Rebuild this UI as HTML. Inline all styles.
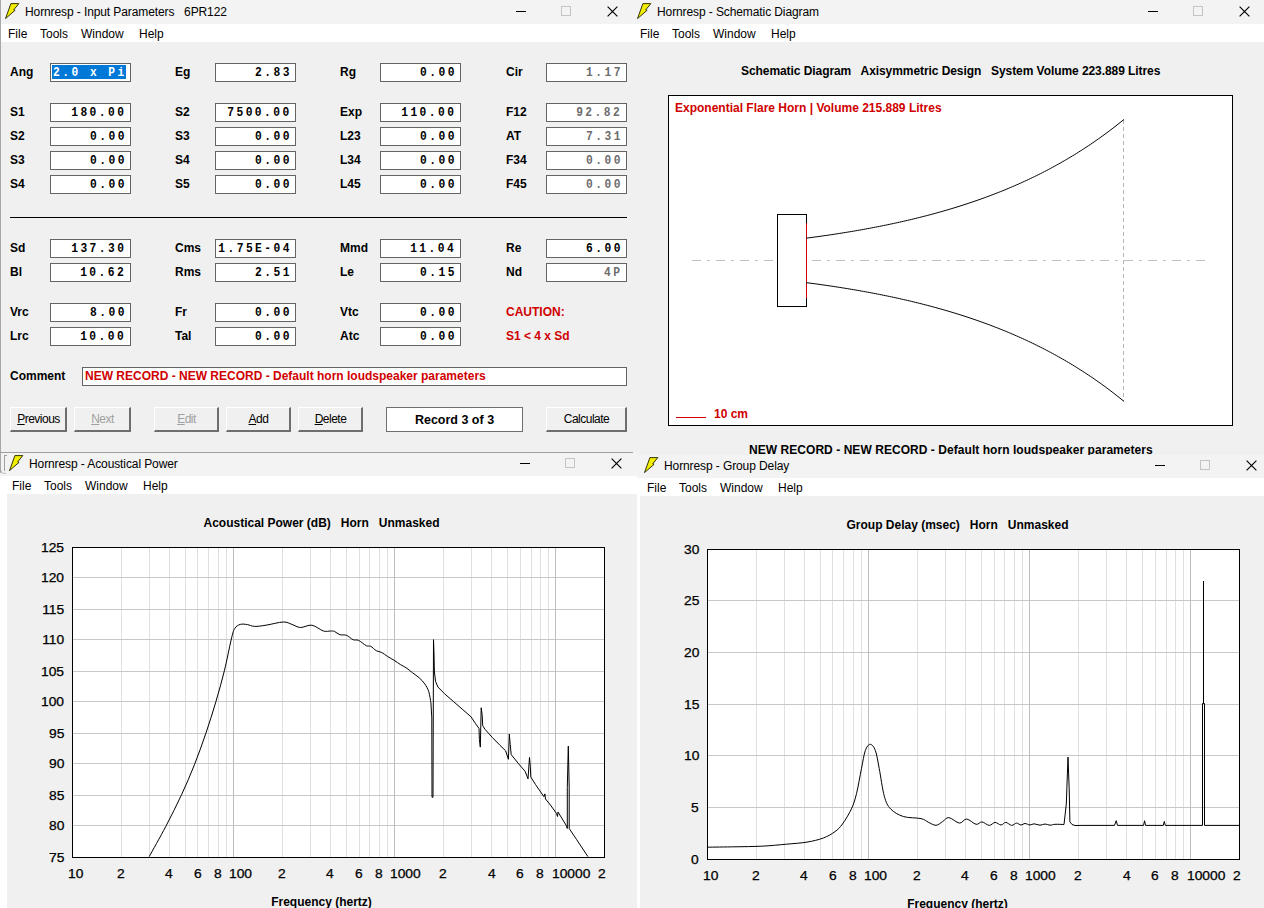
<!DOCTYPE html><html><head><meta charset="utf-8"><style>
html,body{margin:0;padding:0;width:1264px;height:908px;overflow:hidden;background:#f0f0f0;position:relative}
.t{position:absolute;white-space:pre;line-height:1}
.r{position:absolute;box-sizing:content-box}
.fld{position:absolute;background:#fff;border:1px solid #646464;box-sizing:border-box}
.btn{position:absolute;box-sizing:border-box;background:#f0f0f0;border-top:1px solid #fff;border-left:1px solid #fff;border-right:2px solid #6e6e6e;border-bottom:2px solid #6e6e6e}
</style></head><body>
<div class="r" style="left:0px;top:0px;width:633px;height:453px;background:#f0f0f0;"></div>
<div class="r" style="left:0px;top:0px;width:633px;height:24px;background:#f3f3f3;"></div>
<svg class="r" style="left:5px;top:3px" width="16" height="18" viewBox="0 0 16 18"><path d="M5.9 0.6 L13.8 0.6 L8.7 6.9 L10.1 7.3 L0.5 15.6 Z" fill="#f2ee00" stroke="#2a2a00" stroke-width="0.95" stroke-linejoin="miter"/></svg>
<div class="t" style="left:25px;top:4.84px;font:normal 12px 'Liberation Sans', sans-serif;color:#000;letter-spacing:-0.1px">Hornresp - Input Parameters   6PR122</div>
<div class="r" style="left:516px;top:11px;width:10px;height:1px;background:#000;"></div>
<div class="r" style="left:561px;top:6px;width:8px;height:8px;border:1px solid #c4c4c4"></div>
<svg class="r" style="left:607px;top:6px" width="11" height="11" viewBox="0 0 11 11"><path d="M0.6 0.6 L10.4 10.4 M10.4 0.6 L0.6 10.4" stroke="#000" stroke-width="1.15"/></svg>
<div class="r" style="left:0px;top:24px;width:633px;height:18px;background:#fff;"></div>
<div class="t" style="left:8px;top:26.84px;font:normal 12px 'Liberation Sans', sans-serif;color:#000;">File</div>
<div class="t" style="left:40px;top:26.84px;font:normal 12px 'Liberation Sans', sans-serif;color:#000;">Tools</div>
<div class="t" style="left:81px;top:26.84px;font:normal 12px 'Liberation Sans', sans-serif;color:#000;">Window</div>
<div class="t" style="left:139px;top:26.84px;font:normal 12px 'Liberation Sans', sans-serif;color:#000;">Help</div>
<div class="r" style="left:0px;top:0px;width:1px;height:453px;background:#a8a8a8;"></div>
<div class="r" style="left:0px;top:452px;width:633px;height:1px;background:#a0a0a0;"></div>
<div class="t" style="left:10px;top:65.34px;font:bold 12px 'Liberation Sans', sans-serif;color:#000;">Ang</div>
<div class="fld" style="left:50px;top:63px;width:81px;height:19px"></div>
<div class="r" style="left:52px;top:65px;width:74px;height:14px;background:#0078d7;"></div>
<div class="t" style="left:53px;top:66.42px;font:bold 12.5px 'Liberation Mono', monospace;color:#fff;letter-spacing:2.75px;transform:scaleX(0.9);transform-origin:0 0">2.0 x Pi</div>
<div class="t" style="left:175px;top:65.34px;font:bold 12px 'Liberation Sans', sans-serif;color:#000;">Eg</div>
<div class="fld" style="left:215px;top:63px;width:81px;height:19px"></div>
<div class="t" style="right:972.25px;top:66.42px;font:bold 12.5px 'Liberation Mono', monospace;color:#000;letter-spacing:2.75px;transform:scaleX(0.9);transform-origin:100% 0">2.83</div>
<div class="t" style="left:340px;top:65.34px;font:bold 12px 'Liberation Sans', sans-serif;color:#000;">Rg</div>
<div class="fld" style="left:380px;top:63px;width:81px;height:19px"></div>
<div class="t" style="right:807.25px;top:66.42px;font:bold 12.5px 'Liberation Mono', monospace;color:#000;letter-spacing:2.75px;transform:scaleX(0.9);transform-origin:100% 0">0.00</div>
<div class="t" style="left:506px;top:65.34px;font:bold 12px 'Liberation Sans', sans-serif;color:#000;">Cir</div>
<div class="fld" style="left:546px;top:63px;width:81px;height:19px"></div>
<div class="t" style="right:641.25px;top:66.42px;font:bold 12.5px 'Liberation Mono', monospace;color:#6d6d6d;letter-spacing:2.75px;transform:scaleX(0.9);transform-origin:100% 0">1.17</div>
<div class="t" style="left:10px;top:105.34px;font:bold 12px 'Liberation Sans', sans-serif;color:#000;">S1</div>
<div class="fld" style="left:50px;top:103px;width:81px;height:19px"></div>
<div class="t" style="right:1137.25px;top:106.42px;font:bold 12.5px 'Liberation Mono', monospace;color:#000;letter-spacing:2.75px;transform:scaleX(0.9);transform-origin:100% 0">180.00</div>
<div class="t" style="left:175px;top:105.34px;font:bold 12px 'Liberation Sans', sans-serif;color:#000;">S2</div>
<div class="fld" style="left:215px;top:103px;width:81px;height:19px"></div>
<div class="t" style="right:972.25px;top:106.42px;font:bold 12.5px 'Liberation Mono', monospace;color:#000;letter-spacing:2.75px;transform:scaleX(0.9);transform-origin:100% 0">7500.00</div>
<div class="t" style="left:340px;top:105.34px;font:bold 12px 'Liberation Sans', sans-serif;color:#000;">Exp</div>
<div class="fld" style="left:380px;top:103px;width:81px;height:19px"></div>
<div class="t" style="right:807.25px;top:106.42px;font:bold 12.5px 'Liberation Mono', monospace;color:#000;letter-spacing:2.75px;transform:scaleX(0.9);transform-origin:100% 0">110.00</div>
<div class="t" style="left:506px;top:105.34px;font:bold 12px 'Liberation Sans', sans-serif;color:#000;">F12</div>
<div class="fld" style="left:546px;top:103px;width:81px;height:19px"></div>
<div class="t" style="right:641.25px;top:106.42px;font:bold 12.5px 'Liberation Mono', monospace;color:#6d6d6d;letter-spacing:2.75px;transform:scaleX(0.9);transform-origin:100% 0">92.82</div>
<div class="t" style="left:10px;top:129.34px;font:bold 12px 'Liberation Sans', sans-serif;color:#000;">S2</div>
<div class="fld" style="left:50px;top:127px;width:81px;height:19px"></div>
<div class="t" style="right:1137.25px;top:130.42px;font:bold 12.5px 'Liberation Mono', monospace;color:#000;letter-spacing:2.75px;transform:scaleX(0.9);transform-origin:100% 0">0.00</div>
<div class="t" style="left:175px;top:129.34px;font:bold 12px 'Liberation Sans', sans-serif;color:#000;">S3</div>
<div class="fld" style="left:215px;top:127px;width:81px;height:19px"></div>
<div class="t" style="right:972.25px;top:130.42px;font:bold 12.5px 'Liberation Mono', monospace;color:#000;letter-spacing:2.75px;transform:scaleX(0.9);transform-origin:100% 0">0.00</div>
<div class="t" style="left:340px;top:129.34px;font:bold 12px 'Liberation Sans', sans-serif;color:#000;">L23</div>
<div class="fld" style="left:380px;top:127px;width:81px;height:19px"></div>
<div class="t" style="right:807.25px;top:130.42px;font:bold 12.5px 'Liberation Mono', monospace;color:#000;letter-spacing:2.75px;transform:scaleX(0.9);transform-origin:100% 0">0.00</div>
<div class="t" style="left:506px;top:129.34px;font:bold 12px 'Liberation Sans', sans-serif;color:#000;">AT</div>
<div class="fld" style="left:546px;top:127px;width:81px;height:19px"></div>
<div class="t" style="right:641.25px;top:130.42px;font:bold 12.5px 'Liberation Mono', monospace;color:#6d6d6d;letter-spacing:2.75px;transform:scaleX(0.9);transform-origin:100% 0">7.31</div>
<div class="t" style="left:10px;top:153.34px;font:bold 12px 'Liberation Sans', sans-serif;color:#000;">S3</div>
<div class="fld" style="left:50px;top:151px;width:81px;height:19px"></div>
<div class="t" style="right:1137.25px;top:154.42px;font:bold 12.5px 'Liberation Mono', monospace;color:#000;letter-spacing:2.75px;transform:scaleX(0.9);transform-origin:100% 0">0.00</div>
<div class="t" style="left:175px;top:153.34px;font:bold 12px 'Liberation Sans', sans-serif;color:#000;">S4</div>
<div class="fld" style="left:215px;top:151px;width:81px;height:19px"></div>
<div class="t" style="right:972.25px;top:154.42px;font:bold 12.5px 'Liberation Mono', monospace;color:#000;letter-spacing:2.75px;transform:scaleX(0.9);transform-origin:100% 0">0.00</div>
<div class="t" style="left:340px;top:153.34px;font:bold 12px 'Liberation Sans', sans-serif;color:#000;">L34</div>
<div class="fld" style="left:380px;top:151px;width:81px;height:19px"></div>
<div class="t" style="right:807.25px;top:154.42px;font:bold 12.5px 'Liberation Mono', monospace;color:#000;letter-spacing:2.75px;transform:scaleX(0.9);transform-origin:100% 0">0.00</div>
<div class="t" style="left:506px;top:153.34px;font:bold 12px 'Liberation Sans', sans-serif;color:#000;">F34</div>
<div class="fld" style="left:546px;top:151px;width:81px;height:19px"></div>
<div class="t" style="right:641.25px;top:154.42px;font:bold 12.5px 'Liberation Mono', monospace;color:#6d6d6d;letter-spacing:2.75px;transform:scaleX(0.9);transform-origin:100% 0">0.00</div>
<div class="t" style="left:10px;top:177.34px;font:bold 12px 'Liberation Sans', sans-serif;color:#000;">S4</div>
<div class="fld" style="left:50px;top:175px;width:81px;height:19px"></div>
<div class="t" style="right:1137.25px;top:178.42px;font:bold 12.5px 'Liberation Mono', monospace;color:#000;letter-spacing:2.75px;transform:scaleX(0.9);transform-origin:100% 0">0.00</div>
<div class="t" style="left:175px;top:177.34px;font:bold 12px 'Liberation Sans', sans-serif;color:#000;">S5</div>
<div class="fld" style="left:215px;top:175px;width:81px;height:19px"></div>
<div class="t" style="right:972.25px;top:178.42px;font:bold 12.5px 'Liberation Mono', monospace;color:#000;letter-spacing:2.75px;transform:scaleX(0.9);transform-origin:100% 0">0.00</div>
<div class="t" style="left:340px;top:177.34px;font:bold 12px 'Liberation Sans', sans-serif;color:#000;">L45</div>
<div class="fld" style="left:380px;top:175px;width:81px;height:19px"></div>
<div class="t" style="right:807.25px;top:178.42px;font:bold 12.5px 'Liberation Mono', monospace;color:#000;letter-spacing:2.75px;transform:scaleX(0.9);transform-origin:100% 0">0.00</div>
<div class="t" style="left:506px;top:177.34px;font:bold 12px 'Liberation Sans', sans-serif;color:#000;">F45</div>
<div class="fld" style="left:546px;top:175px;width:81px;height:19px"></div>
<div class="t" style="right:641.25px;top:178.42px;font:bold 12.5px 'Liberation Mono', monospace;color:#6d6d6d;letter-spacing:2.75px;transform:scaleX(0.9);transform-origin:100% 0">0.00</div>
<div class="t" style="left:10px;top:241.34px;font:bold 12px 'Liberation Sans', sans-serif;color:#000;">Sd</div>
<div class="fld" style="left:50px;top:239px;width:81px;height:19px"></div>
<div class="t" style="right:1137.25px;top:242.42px;font:bold 12.5px 'Liberation Mono', monospace;color:#000;letter-spacing:2.75px;transform:scaleX(0.9);transform-origin:100% 0">137.30</div>
<div class="t" style="left:175px;top:241.34px;font:bold 12px 'Liberation Sans', sans-serif;color:#000;">Cms</div>
<div class="fld" style="left:215px;top:239px;width:81px;height:19px"></div>
<div class="t" style="right:972.25px;top:242.42px;font:bold 12.5px 'Liberation Mono', monospace;color:#000;letter-spacing:2.75px;transform:scaleX(0.9);transform-origin:100% 0">1.75E-04</div>
<div class="t" style="left:340px;top:241.34px;font:bold 12px 'Liberation Sans', sans-serif;color:#000;">Mmd</div>
<div class="fld" style="left:380px;top:239px;width:81px;height:19px"></div>
<div class="t" style="right:807.25px;top:242.42px;font:bold 12.5px 'Liberation Mono', monospace;color:#000;letter-spacing:2.75px;transform:scaleX(0.9);transform-origin:100% 0">11.04</div>
<div class="t" style="left:506px;top:241.34px;font:bold 12px 'Liberation Sans', sans-serif;color:#000;">Re</div>
<div class="fld" style="left:546px;top:239px;width:81px;height:19px"></div>
<div class="t" style="right:641.25px;top:242.42px;font:bold 12.5px 'Liberation Mono', monospace;color:#000;letter-spacing:2.75px;transform:scaleX(0.9);transform-origin:100% 0">6.00</div>
<div class="t" style="left:10px;top:265.34px;font:bold 12px 'Liberation Sans', sans-serif;color:#000;">Bl</div>
<div class="fld" style="left:50px;top:263px;width:81px;height:19px"></div>
<div class="t" style="right:1137.25px;top:266.42px;font:bold 12.5px 'Liberation Mono', monospace;color:#000;letter-spacing:2.75px;transform:scaleX(0.9);transform-origin:100% 0">10.62</div>
<div class="t" style="left:175px;top:265.34px;font:bold 12px 'Liberation Sans', sans-serif;color:#000;">Rms</div>
<div class="fld" style="left:215px;top:263px;width:81px;height:19px"></div>
<div class="t" style="right:972.25px;top:266.42px;font:bold 12.5px 'Liberation Mono', monospace;color:#000;letter-spacing:2.75px;transform:scaleX(0.9);transform-origin:100% 0">2.51</div>
<div class="t" style="left:340px;top:265.34px;font:bold 12px 'Liberation Sans', sans-serif;color:#000;">Le</div>
<div class="fld" style="left:380px;top:263px;width:81px;height:19px"></div>
<div class="t" style="right:807.25px;top:266.42px;font:bold 12.5px 'Liberation Mono', monospace;color:#000;letter-spacing:2.75px;transform:scaleX(0.9);transform-origin:100% 0">0.15</div>
<div class="t" style="left:506px;top:265.34px;font:bold 12px 'Liberation Sans', sans-serif;color:#000;">Nd</div>
<div class="fld" style="left:546px;top:263px;width:81px;height:19px"></div>
<div class="t" style="right:641.25px;top:266.42px;font:bold 12.5px 'Liberation Mono', monospace;color:#6d6d6d;letter-spacing:2.75px;transform:scaleX(0.9);transform-origin:100% 0">4P</div>
<div class="t" style="left:10px;top:305.34px;font:bold 12px 'Liberation Sans', sans-serif;color:#000;">Vrc</div>
<div class="fld" style="left:50px;top:303px;width:81px;height:19px"></div>
<div class="t" style="right:1137.25px;top:306.42px;font:bold 12.5px 'Liberation Mono', monospace;color:#000;letter-spacing:2.75px;transform:scaleX(0.9);transform-origin:100% 0">8.00</div>
<div class="t" style="left:175px;top:305.34px;font:bold 12px 'Liberation Sans', sans-serif;color:#000;">Fr</div>
<div class="fld" style="left:215px;top:303px;width:81px;height:19px"></div>
<div class="t" style="right:972.25px;top:306.42px;font:bold 12.5px 'Liberation Mono', monospace;color:#000;letter-spacing:2.75px;transform:scaleX(0.9);transform-origin:100% 0">0.00</div>
<div class="t" style="left:340px;top:305.34px;font:bold 12px 'Liberation Sans', sans-serif;color:#000;">Vtc</div>
<div class="fld" style="left:380px;top:303px;width:81px;height:19px"></div>
<div class="t" style="right:807.25px;top:306.42px;font:bold 12.5px 'Liberation Mono', monospace;color:#000;letter-spacing:2.75px;transform:scaleX(0.9);transform-origin:100% 0">0.00</div>
<div class="t" style="left:10px;top:329.34px;font:bold 12px 'Liberation Sans', sans-serif;color:#000;">Lrc</div>
<div class="fld" style="left:50px;top:327px;width:81px;height:19px"></div>
<div class="t" style="right:1137.25px;top:330.42px;font:bold 12.5px 'Liberation Mono', monospace;color:#000;letter-spacing:2.75px;transform:scaleX(0.9);transform-origin:100% 0">10.00</div>
<div class="t" style="left:175px;top:329.34px;font:bold 12px 'Liberation Sans', sans-serif;color:#000;">Tal</div>
<div class="fld" style="left:215px;top:327px;width:81px;height:19px"></div>
<div class="t" style="right:972.25px;top:330.42px;font:bold 12.5px 'Liberation Mono', monospace;color:#000;letter-spacing:2.75px;transform:scaleX(0.9);transform-origin:100% 0">0.00</div>
<div class="t" style="left:340px;top:329.34px;font:bold 12px 'Liberation Sans', sans-serif;color:#000;">Atc</div>
<div class="fld" style="left:380px;top:327px;width:81px;height:19px"></div>
<div class="t" style="right:807.25px;top:330.42px;font:bold 12.5px 'Liberation Mono', monospace;color:#000;letter-spacing:2.75px;transform:scaleX(0.9);transform-origin:100% 0">0.00</div>
<div class="t" style="left:506px;top:305.34px;font:bold 12px 'Liberation Sans', sans-serif;color:#d00000;">CAUTION:</div>
<div class="t" style="left:506px;top:329.34px;font:bold 12px 'Liberation Sans', sans-serif;color:#d00000;">S1 &lt; 4 x Sd</div>
<div class="r" style="left:10px;top:217px;width:617px;height:1px;background:#000;"></div>
<div class="t" style="left:10px;top:369.04px;font:bold 12px 'Liberation Sans', sans-serif;color:#000;">Comment</div>
<div class="fld" style="left:82px;top:367px;width:545px;height:19px"></div>
<div class="t" style="left:85px;top:369.34px;font:bold 12px 'Liberation Sans', sans-serif;color:#d00000;">NEW RECORD - NEW RECORD - Default horn loudspeaker parameters</div>
<div class="btn" style="left:10px;top:407px;width:57px;height:25px"></div>
<div class="t" style="left:10px;width:57px;text-align:center;top:412.34px;font:12px 'Liberation Sans', sans-serif;letter-spacing:-0.5px;color:#000"><u>P</u>revious</div>
<div class="btn" style="left:74px;top:407px;width:57px;height:25px"></div>
<div class="t" style="left:74px;width:57px;text-align:center;top:412.34px;font:12px 'Liberation Sans', sans-serif;letter-spacing:-0.5px;color:#a0a0a0"><u>N</u>ext</div>
<div class="btn" style="left:154px;top:407px;width:65px;height:25px"></div>
<div class="t" style="left:154px;width:65px;text-align:center;top:412.34px;font:12px 'Liberation Sans', sans-serif;letter-spacing:-0.5px;color:#a0a0a0"><u>E</u>dit</div>
<div class="btn" style="left:226px;top:407px;width:65px;height:25px"></div>
<div class="t" style="left:226px;width:65px;text-align:center;top:412.34px;font:12px 'Liberation Sans', sans-serif;letter-spacing:-0.5px;color:#000"><u>A</u>dd</div>
<div class="btn" style="left:298px;top:407px;width:65px;height:25px"></div>
<div class="t" style="left:298px;width:65px;text-align:center;top:412.34px;font:12px 'Liberation Sans', sans-serif;letter-spacing:-0.5px;color:#000"><u>D</u>elete</div>
<div class="fld" style="left:386px;top:407px;width:137px;height:25px;border-color:#6e6e6e"></div>
<div class="t" style="left:386px;width:137px;text-align:center;top:413.42px;font:bold 12.5px 'Liberation Sans', sans-serif;color:#000">Record 3 of 3</div>
<div class="btn" style="left:546px;top:407px;width:81px;height:25px"></div>
<div class="t" style="left:546px;width:81px;text-align:center;top:412.34px;font:12px 'Liberation Sans', sans-serif;letter-spacing:-0.5px;color:#000">Calculate</div>
<div class="r" style="left:633px;top:0px;width:631px;height:455px;background:#f0f0f0;"></div>
<div class="r" style="left:633px;top:0px;width:631px;height:24px;background:#f3f3f3;"></div>
<svg class="r" style="left:637px;top:3px" width="16" height="18" viewBox="0 0 16 18"><path d="M5.9 0.6 L13.8 0.6 L8.7 6.9 L10.1 7.3 L0.5 15.6 Z" fill="#f2ee00" stroke="#2a2a00" stroke-width="0.95" stroke-linejoin="miter"/></svg>
<div class="t" style="left:657px;top:4.84px;font:normal 12px 'Liberation Sans', sans-serif;color:#000;letter-spacing:-0.1px">Hornresp - Schematic Diagram</div>
<div class="r" style="left:1148px;top:11px;width:10px;height:1px;background:#000;"></div>
<div class="r" style="left:1193px;top:6px;width:8px;height:8px;border:1px solid #c4c4c4"></div>
<svg class="r" style="left:1239px;top:6px" width="11" height="11" viewBox="0 0 11 11"><path d="M0.6 0.6 L10.4 10.4 M10.4 0.6 L0.6 10.4" stroke="#000" stroke-width="1.15"/></svg>
<div class="r" style="left:633px;top:24px;width:631px;height:18px;background:#fff;"></div>
<div class="t" style="left:640px;top:26.84px;font:normal 12px 'Liberation Sans', sans-serif;color:#000;">File</div>
<div class="t" style="left:672px;top:26.84px;font:normal 12px 'Liberation Sans', sans-serif;color:#000;">Tools</div>
<div class="t" style="left:713px;top:26.84px;font:normal 12px 'Liberation Sans', sans-serif;color:#000;">Window</div>
<div class="t" style="left:771px;top:26.84px;font:normal 12px 'Liberation Sans', sans-serif;color:#000;">Help</div>
<div class="t" style="left:741px;top:63.84px;font:bold 12px 'Liberation Sans', sans-serif;color:#000;letter-spacing:-0.07px">Schematic Diagram   Axisymmetric Design   System Volume 223.889 Litres</div>
<div class="r" style="left:668px;top:95px;width:565px;height:331px;background:#000;"></div>
<div class="r" style="left:669px;top:96px;width:563px;height:329px;background:#fff;"></div>
<div class="t" style="left:675px;top:100.84px;font:bold 12px 'Liberation Sans', sans-serif;color:#d00000;">Exponential Flare Horn | Volume 215.889 Litres</div>
<svg class="r" style="left:0;top:0" width="1264" height="455" viewBox="0 0 1264 455"><line x1="692" y1="260.5" x2="1206" y2="260.5" stroke="#c0c0c0" stroke-width="1" stroke-dasharray="9 6 3 6"/><line x1="1123.5" y1="120" x2="1123.5" y2="401" stroke="#b8b8b8" stroke-width="1" stroke-dasharray="4 3"/><rect x="777.5" y="214.5" width="29" height="92" fill="#fff" stroke="#000" stroke-width="1"/><line x1="806.5" y1="223" x2="806.5" y2="298" stroke="#d00000" stroke-width="1"/><path d="M806.00,238.20 L807.99,237.94 L809.98,237.68 L811.96,237.42 L813.95,237.15 L815.94,236.88 L817.92,236.61 L819.91,236.33 L821.90,236.05 L823.89,235.77 L825.88,235.48 L827.86,235.19 L829.85,234.90 L831.84,234.60 L833.83,234.30 L835.81,234.00 L837.80,233.69 L839.79,233.38 L841.77,233.07 L843.76,232.75 L845.75,232.43 L847.74,232.10 L849.73,231.77 L851.71,231.44 L853.70,231.11 L855.69,230.77 L857.67,230.42 L859.66,230.07 L861.65,229.72 L863.64,229.36 L865.62,229.00 L867.61,228.64 L869.60,228.27 L871.59,227.90 L873.58,227.52 L875.56,227.14 L877.55,226.75 L879.54,226.36 L881.52,225.96 L883.51,225.56 L885.50,225.16 L887.49,224.75 L889.48,224.33 L891.46,223.91 L893.45,223.49 L895.44,223.06 L897.42,222.63 L899.41,222.19 L901.40,221.74 L903.39,221.30 L905.38,220.84 L907.36,220.38 L909.35,219.92 L911.34,219.45 L913.33,218.97 L915.31,218.49 L917.30,218.00 L919.29,217.51 L921.27,217.01 L923.26,216.51 L925.25,216.00 L927.24,215.48 L929.23,214.96 L931.21,214.43 L933.20,213.90 L935.19,213.35 L937.17,212.81 L939.16,212.25 L941.15,211.70 L943.14,211.13 L945.12,210.56 L947.11,209.98 L949.10,209.39 L951.09,208.80 L953.08,208.20 L955.06,207.59 L957.05,206.98 L959.04,206.36 L961.02,205.73 L963.01,205.09 L965.00,204.45 L966.99,203.80 L968.98,203.14 L970.96,202.48 L972.95,201.81 L974.94,201.12 L976.92,200.44 L978.91,199.74 L980.90,199.03 L982.89,198.32 L984.88,197.60 L986.86,196.87 L988.85,196.13 L990.84,195.38 L992.83,194.63 L994.81,193.86 L996.80,193.09 L998.79,192.31 L1000.77,191.52 L1002.76,190.72 L1004.75,189.91 L1006.74,189.09 L1008.73,188.26 L1010.71,187.42 L1012.70,186.57 L1014.69,185.71 L1016.67,184.85 L1018.66,183.97 L1020.65,183.08 L1022.64,182.18 L1024.62,181.27 L1026.61,180.35 L1028.60,179.42 L1030.59,178.48 L1032.58,177.53 L1034.56,176.57 L1036.55,175.59 L1038.54,174.61 L1040.53,173.61 L1042.51,172.60 L1044.50,171.58 L1046.49,170.55 L1048.47,169.51 L1050.46,168.45 L1052.45,167.38 L1054.44,166.30 L1056.42,165.21 L1058.41,164.10 L1060.40,162.98 L1062.39,161.85 L1064.38,160.70 L1066.36,159.54 L1068.35,158.37 L1070.34,157.19 L1072.33,155.99 L1074.31,154.77 L1076.30,153.55 L1078.29,152.30 L1080.28,151.05 L1082.26,149.78 L1084.25,148.49 L1086.24,147.19 L1088.22,145.88 L1090.21,144.55 L1092.20,143.20 L1094.19,141.84 L1096.17,140.46 L1098.16,139.06 L1100.15,137.65 L1102.14,136.23 L1104.12,134.79 L1106.11,133.33 L1108.10,131.85 L1110.09,130.35 L1112.08,128.84 L1114.06,127.31 L1116.05,125.77 L1118.04,124.20 L1120.03,122.62 L1122.01,121.02 L1124.00,119.40" fill="none" stroke="#000" stroke-width="1.0"/><path d="M806.00,282.60 L807.99,282.86 L809.98,283.12 L811.96,283.38 L813.95,283.65 L815.94,283.92 L817.92,284.19 L819.91,284.47 L821.90,284.75 L823.89,285.03 L825.88,285.32 L827.86,285.61 L829.85,285.90 L831.84,286.20 L833.83,286.50 L835.81,286.80 L837.80,287.11 L839.79,287.42 L841.77,287.73 L843.76,288.05 L845.75,288.37 L847.74,288.70 L849.73,289.03 L851.71,289.36 L853.70,289.69 L855.69,290.03 L857.67,290.38 L859.66,290.73 L861.65,291.08 L863.64,291.44 L865.62,291.80 L867.61,292.16 L869.60,292.53 L871.59,292.90 L873.58,293.28 L875.56,293.66 L877.55,294.05 L879.54,294.44 L881.52,294.84 L883.51,295.24 L885.50,295.64 L887.49,296.05 L889.48,296.47 L891.46,296.89 L893.45,297.31 L895.44,297.74 L897.42,298.17 L899.41,298.61 L901.40,299.06 L903.39,299.50 L905.38,299.96 L907.36,300.42 L909.35,300.88 L911.34,301.35 L913.33,301.83 L915.31,302.31 L917.30,302.80 L919.29,303.29 L921.27,303.79 L923.26,304.29 L925.25,304.80 L927.24,305.32 L929.23,305.84 L931.21,306.37 L933.20,306.90 L935.19,307.45 L937.17,307.99 L939.16,308.55 L941.15,309.10 L943.14,309.67 L945.12,310.24 L947.11,310.82 L949.10,311.41 L951.09,312.00 L953.08,312.60 L955.06,313.21 L957.05,313.82 L959.04,314.44 L961.02,315.07 L963.01,315.71 L965.00,316.35 L966.99,317.00 L968.98,317.66 L970.96,318.32 L972.95,318.99 L974.94,319.68 L976.92,320.36 L978.91,321.06 L980.90,321.77 L982.89,322.48 L984.88,323.20 L986.86,323.93 L988.85,324.67 L990.84,325.42 L992.83,326.17 L994.81,326.94 L996.80,327.71 L998.79,328.49 L1000.77,329.28 L1002.76,330.08 L1004.75,330.89 L1006.74,331.71 L1008.73,332.54 L1010.71,333.38 L1012.70,334.23 L1014.69,335.09 L1016.67,335.95 L1018.66,336.83 L1020.65,337.72 L1022.64,338.62 L1024.62,339.53 L1026.61,340.45 L1028.60,341.38 L1030.59,342.32 L1032.58,343.27 L1034.56,344.23 L1036.55,345.21 L1038.54,346.19 L1040.53,347.19 L1042.51,348.20 L1044.50,349.22 L1046.49,350.25 L1048.47,351.29 L1050.46,352.35 L1052.45,353.42 L1054.44,354.50 L1056.42,355.59 L1058.41,356.70 L1060.40,357.82 L1062.39,358.95 L1064.38,360.10 L1066.36,361.26 L1068.35,362.43 L1070.34,363.61 L1072.33,364.81 L1074.31,366.03 L1076.30,367.25 L1078.29,368.50 L1080.28,369.75 L1082.26,371.02 L1084.25,372.31 L1086.24,373.61 L1088.22,374.92 L1090.21,376.25 L1092.20,377.60 L1094.19,378.96 L1096.17,380.34 L1098.16,381.74 L1100.15,383.15 L1102.14,384.57 L1104.12,386.01 L1106.11,387.47 L1108.10,388.95 L1110.09,390.45 L1112.08,391.96 L1114.06,393.49 L1116.05,395.03 L1118.04,396.60 L1120.03,398.18 L1122.01,399.78 L1124.00,401.40" fill="none" stroke="#000" stroke-width="1.0"/><rect x="676" y="417" width="30" height="1" fill="#d00000"/></svg>
<div class="t" style="left:714px;top:406.84px;font:bold 12px 'Liberation Sans', sans-serif;color:#d00000;">10 cm</div>
<div class="t" style="left:749px;top:442.84px;font:bold 12px 'Liberation Sans', sans-serif;color:#000;letter-spacing:0.05px">NEW RECORD - NEW RECORD - Default horn loudspeaker parameters</div>
<div class="r" style="left:0px;top:453px;width:637px;height:455px;background:#fff;"></div>
<div class="r" style="left:0px;top:453px;width:637px;height:23px;background:#f3f3f3;"></div>
<svg class="r" style="left:9px;top:454.5px" width="16" height="18" viewBox="0 0 16 18"><path d="M5.9 0.6 L13.8 0.6 L8.7 6.9 L10.1 7.3 L0.5 15.6 Z" fill="#f2ee00" stroke="#2a2a00" stroke-width="0.95" stroke-linejoin="miter"/></svg>
<div class="t" style="left:29px;top:456.84px;font:normal 12px 'Liberation Sans', sans-serif;color:#000;letter-spacing:-0.1px">Hornresp - Acoustical Power</div>
<div class="r" style="left:520px;top:463px;width:10px;height:1px;background:#000;"></div>
<div class="r" style="left:565px;top:458px;width:8px;height:8px;border:1px solid #c4c4c4"></div>
<svg class="r" style="left:611px;top:458px" width="11" height="11" viewBox="0 0 11 11"><path d="M0.6 0.6 L10.4 10.4 M10.4 0.6 L0.6 10.4" stroke="#000" stroke-width="1.15"/></svg>
<div class="r" style="left:0px;top:476px;width:637px;height:18px;background:#fff;"></div>
<div class="t" style="left:12px;top:479.34px;font:normal 12px 'Liberation Sans', sans-serif;color:#000;">File</div>
<div class="t" style="left:44px;top:479.34px;font:normal 12px 'Liberation Sans', sans-serif;color:#000;">Tools</div>
<div class="t" style="left:85px;top:479.34px;font:normal 12px 'Liberation Sans', sans-serif;color:#000;">Window</div>
<div class="t" style="left:143px;top:479.34px;font:normal 12px 'Liberation Sans', sans-serif;color:#000;">Help</div>
<div class="r" style="left:7px;top:494px;width:630px;height:414px;background:#f0f0f0;"></div>
<div class="r" style="left:0px;top:453px;width:1px;height:20px;background:#a8a8a8;"></div>
<div class="r" style="left:0px;top:466px;width:5px;height:7px;border-left:1px solid #a8a8a8;border-bottom:1px solid #b8b8b8;border-bottom-left-radius:5px"></div>
<div class="r" style="left:4px;top:455px;width:1px;height:16px;background:#a0a0a0;"></div>
<div class="r" style="left:4px;top:455px;width:3px;height:1px;background:#a0a0a0;"></div>
<svg class="r" style="left:0;top:0" width="1264" height="908" viewBox="0 0 1264 908"><rect x="72" y="547" width="532" height="310" fill="#fff"/><rect x="121" y="547" width="1" height="310" fill="#e0e0e0"/><rect x="149" y="547" width="1" height="310" fill="#e0e0e0"/><rect x="169" y="547" width="1" height="310" fill="#e0e0e0"/><rect x="185" y="547" width="1" height="310" fill="#e0e0e0"/><rect x="197" y="547" width="1" height="310" fill="#e0e0e0"/><rect x="208" y="547" width="1" height="310" fill="#e0e0e0"/><rect x="218" y="547" width="1" height="310" fill="#e0e0e0"/><rect x="226" y="547" width="1" height="310" fill="#e0e0e0"/><rect x="282" y="547" width="1" height="310" fill="#e0e0e0"/><rect x="310" y="547" width="1" height="310" fill="#e0e0e0"/><rect x="330" y="547" width="1" height="310" fill="#e0e0e0"/><rect x="346" y="547" width="1" height="310" fill="#e0e0e0"/><rect x="359" y="547" width="1" height="310" fill="#e0e0e0"/><rect x="369" y="547" width="1" height="310" fill="#e0e0e0"/><rect x="379" y="547" width="1" height="310" fill="#e0e0e0"/><rect x="387" y="547" width="1" height="310" fill="#e0e0e0"/><rect x="443" y="547" width="1" height="310" fill="#e0e0e0"/><rect x="471" y="547" width="1" height="310" fill="#e0e0e0"/><rect x="491" y="547" width="1" height="310" fill="#e0e0e0"/><rect x="507" y="547" width="1" height="310" fill="#e0e0e0"/><rect x="520" y="547" width="1" height="310" fill="#e0e0e0"/><rect x="531" y="547" width="1" height="310" fill="#e0e0e0"/><rect x="540" y="547" width="1" height="310" fill="#e0e0e0"/><rect x="548" y="547" width="1" height="310" fill="#e0e0e0"/><rect x="72" y="547" width="532" height="1" fill="#c8c8c8"/><rect x="72" y="577" width="532" height="1" fill="#c8c8c8"/><rect x="72" y="609" width="532" height="1" fill="#c8c8c8"/><rect x="72" y="639" width="532" height="1" fill="#c8c8c8"/><rect x="72" y="671" width="532" height="1" fill="#c8c8c8"/><rect x="72" y="701" width="532" height="1" fill="#c8c8c8"/><rect x="72" y="733" width="532" height="1" fill="#c8c8c8"/><rect x="72" y="763" width="532" height="1" fill="#c8c8c8"/><rect x="72" y="795" width="532" height="1" fill="#c8c8c8"/><rect x="72" y="825" width="532" height="1" fill="#c8c8c8"/><rect x="72" y="857" width="532" height="1" fill="#c8c8c8"/><rect x="233" y="547" width="1" height="310" fill="#bdbdbd"/><rect x="394" y="547" width="1" height="310" fill="#bdbdbd"/><rect x="555" y="547" width="1" height="310" fill="#bdbdbd"/><path d="M149.20,856.60 C151.97,851.57 160.42,836.70 165.80,826.40 C171.18,816.10 176.73,805.07 181.50,794.80 C186.27,784.53 190.33,775.07 194.40,764.80 C198.47,754.53 202.32,743.72 205.90,733.20 C209.48,722.68 212.80,712.20 215.90,701.70 C219.00,691.20 221.97,680.47 224.50,670.20 C227.03,659.93 229.42,647.02 231.10,640.10 C232.78,633.18 233.07,631.32 234.60,628.70 C236.13,626.08 238.17,625.08 240.30,624.40 C242.43,623.72 245.02,624.27 247.40,624.60 C249.78,624.93 251.50,626.30 254.60,626.40 C257.70,626.50 261.22,625.93 266.00,625.20 C270.78,624.47 278.98,622.13 283.30,622.00 C287.62,621.87 289.03,623.48 291.90,624.40 C294.77,625.32 297.17,627.37 300.50,627.50 C303.83,627.63 308.08,624.62 311.90,625.20 C315.72,625.78 320.30,630.03 323.40,631.00 C326.50,631.97 328.67,630.93 330.50,631.00 C332.33,631.07 332.83,630.78 334.40,631.40 C335.97,632.02 337.88,634.05 339.90,634.70 C341.92,635.35 344.30,634.47 346.50,635.30 C348.70,636.13 351.08,638.85 353.10,639.70 C355.12,640.55 356.40,639.40 358.60,640.40 C360.80,641.40 364.28,644.72 366.30,645.70 C368.32,646.68 369.03,645.47 370.70,646.30 C372.37,647.13 374.45,649.67 376.30,650.70 C378.15,651.73 379.97,651.57 381.80,652.50 C383.63,653.43 385.28,655.02 387.30,656.30 C389.32,657.58 391.70,658.82 393.90,660.20 C396.10,661.58 398.48,663.35 400.50,664.60 C402.52,665.85 403.98,666.33 406.00,667.70 C408.02,669.07 410.40,671.12 412.60,672.80 C414.80,674.48 417.18,675.97 419.20,677.80 C421.22,679.63 423.12,681.52 424.70,683.80 C426.28,686.08 427.67,688.38 428.70,691.50 C429.73,694.62 430.53,700.67 430.90,702.50 L431.80,717.90 L432.00,797.20 L433.00,797.20 L433.50,639.70 L434.00,654.00 L434.40,672.00 L435.60,681.50 L437.90,687.00 L444.50,693.70 L453.30,701.40 L462.20,709.10 L471.00,716.80 L475.60,723.70 L479.00,728.40 L479.40,739.60 L480.30,747.10 L481.20,707.80 L482.20,715.30 L482.70,725.60 L485.00,729.30 L492.50,737.70 L499.90,745.20 L505.60,750.80 L508.40,759.30 L509.30,734.00 L510.20,744.30 L511.20,754.60 L518.70,763.90 L525.20,771.40 L528.00,778.90 L529.50,757.40 L530.30,766.70 L530.80,777.00 L535.50,784.50 L543.90,796.70 L544.90,793.90 L545.50,799.00 L550.50,805.10 L556.50,813.50 L557.50,816.50 L558.00,812.00 L566.40,825.70 L567.30,828.50 L567.30,787.30 L568.30,746.10 L569.20,787.30 L569.20,828.50 L576.70,839.70 L587.90,856.60" fill="none" stroke="#000" stroke-width="1.0" stroke-linejoin="round"/><rect x="72" y="547" width="533" height="1" fill="#000"/><rect x="72" y="857" width="533" height="1" fill="#000"/><rect x="72" y="547" width="1" height="311" fill="#000"/><rect x="604" y="547" width="1" height="311" fill="#000"/></svg>
<div class="t" style="right:1200.00px;top:541.34px;font:normal 12px 'Liberation Sans', sans-serif;letter-spacing:0.0px;color:#000;-webkit-text-stroke:0.25px #000;transform:scaleX(1.15);transform-origin:100% 0">125</div>
<div class="t" style="right:1200.00px;top:571.34px;font:normal 12px 'Liberation Sans', sans-serif;letter-spacing:0.0px;color:#000;-webkit-text-stroke:0.25px #000;transform:scaleX(1.15);transform-origin:100% 0">120</div>
<div class="t" style="right:1200.00px;top:603.34px;font:normal 12px 'Liberation Sans', sans-serif;letter-spacing:0.0px;color:#000;-webkit-text-stroke:0.25px #000;transform:scaleX(1.15);transform-origin:100% 0">115</div>
<div class="t" style="right:1200.00px;top:633.34px;font:normal 12px 'Liberation Sans', sans-serif;letter-spacing:0.0px;color:#000;-webkit-text-stroke:0.25px #000;transform:scaleX(1.15);transform-origin:100% 0">110</div>
<div class="t" style="right:1200.00px;top:665.34px;font:normal 12px 'Liberation Sans', sans-serif;letter-spacing:0.0px;color:#000;-webkit-text-stroke:0.25px #000;transform:scaleX(1.15);transform-origin:100% 0">105</div>
<div class="t" style="right:1200.00px;top:695.34px;font:normal 12px 'Liberation Sans', sans-serif;letter-spacing:0.0px;color:#000;-webkit-text-stroke:0.25px #000;transform:scaleX(1.15);transform-origin:100% 0">100</div>
<div class="t" style="right:1200.00px;top:727.34px;font:normal 12px 'Liberation Sans', sans-serif;letter-spacing:0.0px;color:#000;-webkit-text-stroke:0.25px #000;transform:scaleX(1.15);transform-origin:100% 0">95</div>
<div class="t" style="right:1200.00px;top:757.34px;font:normal 12px 'Liberation Sans', sans-serif;letter-spacing:0.0px;color:#000;-webkit-text-stroke:0.25px #000;transform:scaleX(1.15);transform-origin:100% 0">90</div>
<div class="t" style="right:1200.00px;top:789.34px;font:normal 12px 'Liberation Sans', sans-serif;letter-spacing:0.0px;color:#000;-webkit-text-stroke:0.25px #000;transform:scaleX(1.15);transform-origin:100% 0">85</div>
<div class="t" style="right:1200.00px;top:819.34px;font:normal 12px 'Liberation Sans', sans-serif;letter-spacing:0.0px;color:#000;-webkit-text-stroke:0.25px #000;transform:scaleX(1.15);transform-origin:100% 0">80</div>
<div class="t" style="right:1200.00px;top:851.34px;font:normal 12px 'Liberation Sans', sans-serif;letter-spacing:0.0px;color:#000;-webkit-text-stroke:0.25px #000;transform:scaleX(1.15);transform-origin:100% 0">75</div>
<div class="t" style="left:21.5px;width:600px;text-align:center;top:515.84px;font:bold 12px 'Liberation Sans', sans-serif">Acoustical Power (dB)   Horn   Unmasked</div>
<div class="t" style="left:68.16px;top:866.84px;font:normal 12px 'Liberation Sans', sans-serif;letter-spacing:0.0px;color:#000;-webkit-text-stroke:0.25px #000;transform:scaleX(1.15);transform-origin:0 0">10</div>
<div class="t" style="left:116.68px;top:866.84px;font:normal 12px 'Liberation Sans', sans-serif;letter-spacing:0.0px;color:#000;-webkit-text-stroke:0.25px #000;transform:scaleX(1.15);transform-origin:0 0">2</div>
<div class="t" style="left:165.19px;top:866.84px;font:normal 12px 'Liberation Sans', sans-serif;letter-spacing:0.0px;color:#000;-webkit-text-stroke:0.25px #000;transform:scaleX(1.15);transform-origin:0 0">4</div>
<div class="t" style="left:193.57px;top:866.84px;font:normal 12px 'Liberation Sans', sans-serif;letter-spacing:0.0px;color:#000;-webkit-text-stroke:0.25px #000;transform:scaleX(1.15);transform-origin:0 0">6</div>
<div class="t" style="left:213.71px;top:866.84px;font:normal 12px 'Liberation Sans', sans-serif;letter-spacing:0.0px;color:#000;-webkit-text-stroke:0.25px #000;transform:scaleX(1.15);transform-origin:0 0">8</div>
<div class="t" style="left:229.33px;top:866.84px;font:normal 12px 'Liberation Sans', sans-serif;letter-spacing:0.0px;color:#000;-webkit-text-stroke:0.25px #000;transform:scaleX(1.15);transform-origin:0 0">100</div>
<div class="t" style="left:277.84px;top:866.84px;font:normal 12px 'Liberation Sans', sans-serif;letter-spacing:0.0px;color:#000;-webkit-text-stroke:0.25px #000;transform:scaleX(1.15);transform-origin:0 0">2</div>
<div class="t" style="left:326.35px;top:866.84px;font:normal 12px 'Liberation Sans', sans-serif;letter-spacing:0.0px;color:#000;-webkit-text-stroke:0.25px #000;transform:scaleX(1.15);transform-origin:0 0">4</div>
<div class="t" style="left:354.73px;top:866.84px;font:normal 12px 'Liberation Sans', sans-serif;letter-spacing:0.0px;color:#000;-webkit-text-stroke:0.25px #000;transform:scaleX(1.15);transform-origin:0 0">6</div>
<div class="t" style="left:374.87px;top:866.84px;font:normal 12px 'Liberation Sans', sans-serif;letter-spacing:0.0px;color:#000;-webkit-text-stroke:0.25px #000;transform:scaleX(1.15);transform-origin:0 0">8</div>
<div class="t" style="left:390.49px;top:866.84px;font:normal 12px 'Liberation Sans', sans-serif;letter-spacing:0.0px;color:#000;-webkit-text-stroke:0.25px #000;transform:scaleX(1.15);transform-origin:0 0">1000</div>
<div class="t" style="left:439.00px;top:866.84px;font:normal 12px 'Liberation Sans', sans-serif;letter-spacing:0.0px;color:#000;-webkit-text-stroke:0.25px #000;transform:scaleX(1.15);transform-origin:0 0">2</div>
<div class="t" style="left:487.52px;top:866.84px;font:normal 12px 'Liberation Sans', sans-serif;letter-spacing:0.0px;color:#000;-webkit-text-stroke:0.25px #000;transform:scaleX(1.15);transform-origin:0 0">4</div>
<div class="t" style="left:515.90px;top:866.84px;font:normal 12px 'Liberation Sans', sans-serif;letter-spacing:0.0px;color:#000;-webkit-text-stroke:0.25px #000;transform:scaleX(1.15);transform-origin:0 0">6</div>
<div class="t" style="left:536.03px;top:866.84px;font:normal 12px 'Liberation Sans', sans-serif;letter-spacing:0.0px;color:#000;-webkit-text-stroke:0.25px #000;transform:scaleX(1.15);transform-origin:0 0">8</div>
<div class="t" style="left:551.65px;top:866.84px;font:normal 12px 'Liberation Sans', sans-serif;letter-spacing:0.0px;color:#000;-webkit-text-stroke:0.25px #000;transform:scaleX(1.15);transform-origin:0 0">10000</div>
<div class="t" style="left:598.16px;top:866.84px;font:normal 12px 'Liberation Sans', sans-serif;letter-spacing:0.0px;color:#000;-webkit-text-stroke:0.25px #000;transform:scaleX(1.15);transform-origin:0 0">2</div>
<div class="t" style="left:121.5px;width:400px;text-align:center;top:894.84px;font:bold 12px 'Liberation Sans', sans-serif">Frequency (hertz)</div>
<div class="r" style="left:637px;top:455px;width:627px;height:453px;background:#fff;"></div>
<div class="r" style="left:637px;top:455px;width:627px;height:23px;background:#f3f3f3;"></div>
<svg class="r" style="left:644px;top:456.5px" width="16" height="18" viewBox="0 0 16 18"><path d="M5.9 0.6 L13.8 0.6 L8.7 6.9 L10.1 7.3 L0.5 15.6 Z" fill="#f2ee00" stroke="#2a2a00" stroke-width="0.95" stroke-linejoin="miter"/></svg>
<div class="t" style="left:664px;top:458.84px;font:normal 12px 'Liberation Sans', sans-serif;color:#000;letter-spacing:-0.1px">Hornresp - Group Delay</div>
<div class="r" style="left:1155px;top:465px;width:10px;height:1px;background:#000;"></div>
<div class="r" style="left:1200px;top:460px;width:8px;height:8px;border:1px solid #c4c4c4"></div>
<svg class="r" style="left:1246px;top:460px" width="11" height="11" viewBox="0 0 11 11"><path d="M0.6 0.6 L10.4 10.4 M10.4 0.6 L0.6 10.4" stroke="#000" stroke-width="1.15"/></svg>
<div class="r" style="left:637px;top:478px;width:627px;height:18px;background:#fff;"></div>
<div class="t" style="left:647px;top:481.34px;font:normal 12px 'Liberation Sans', sans-serif;color:#000;">File</div>
<div class="t" style="left:679px;top:481.34px;font:normal 12px 'Liberation Sans', sans-serif;color:#000;">Tools</div>
<div class="t" style="left:720px;top:481.34px;font:normal 12px 'Liberation Sans', sans-serif;color:#000;">Window</div>
<div class="t" style="left:778px;top:481.34px;font:normal 12px 'Liberation Sans', sans-serif;color:#000;">Help</div>
<div class="r" style="left:640px;top:496px;width:624px;height:412px;background:#f0f0f0;"></div>
<svg class="r" style="left:0;top:0" width="1264" height="908" viewBox="0 0 1264 908"><rect x="707" y="549" width="532" height="310" fill="#fff"/><rect x="756" y="549" width="1" height="310" fill="#e0e0e0"/><rect x="784" y="549" width="1" height="310" fill="#e0e0e0"/><rect x="804" y="549" width="1" height="310" fill="#e0e0e0"/><rect x="820" y="549" width="1" height="310" fill="#e0e0e0"/><rect x="832" y="549" width="1" height="310" fill="#e0e0e0"/><rect x="843" y="549" width="1" height="310" fill="#e0e0e0"/><rect x="853" y="549" width="1" height="310" fill="#e0e0e0"/><rect x="861" y="549" width="1" height="310" fill="#e0e0e0"/><rect x="917" y="549" width="1" height="310" fill="#e0e0e0"/><rect x="945" y="549" width="1" height="310" fill="#e0e0e0"/><rect x="965" y="549" width="1" height="310" fill="#e0e0e0"/><rect x="981" y="549" width="1" height="310" fill="#e0e0e0"/><rect x="994" y="549" width="1" height="310" fill="#e0e0e0"/><rect x="1004" y="549" width="1" height="310" fill="#e0e0e0"/><rect x="1014" y="549" width="1" height="310" fill="#e0e0e0"/><rect x="1022" y="549" width="1" height="310" fill="#e0e0e0"/><rect x="1078" y="549" width="1" height="310" fill="#e0e0e0"/><rect x="1106" y="549" width="1" height="310" fill="#e0e0e0"/><rect x="1126" y="549" width="1" height="310" fill="#e0e0e0"/><rect x="1142" y="549" width="1" height="310" fill="#e0e0e0"/><rect x="1155" y="549" width="1" height="310" fill="#e0e0e0"/><rect x="1166" y="549" width="1" height="310" fill="#e0e0e0"/><rect x="1175" y="549" width="1" height="310" fill="#e0e0e0"/><rect x="1183" y="549" width="1" height="310" fill="#e0e0e0"/><rect x="707" y="549" width="532" height="1" fill="#c8c8c8"/><rect x="707" y="600" width="532" height="1" fill="#c8c8c8"/><rect x="707" y="652" width="532" height="1" fill="#c8c8c8"/><rect x="707" y="704" width="532" height="1" fill="#c8c8c8"/><rect x="707" y="755" width="532" height="1" fill="#c8c8c8"/><rect x="707" y="807" width="532" height="1" fill="#c8c8c8"/><rect x="707" y="859" width="532" height="1" fill="#c8c8c8"/><rect x="868" y="549" width="1" height="310" fill="#bdbdbd"/><rect x="1029" y="549" width="1" height="310" fill="#bdbdbd"/><rect x="1190" y="549" width="1" height="310" fill="#bdbdbd"/><path d="M707.80,847.20 C712.33,847.13 726.02,846.97 735.00,846.80 C743.98,846.63 753.13,846.63 761.70,846.20 C770.27,845.77 778.85,844.88 786.40,844.20 C793.95,843.52 800.83,843.13 807.00,842.10 C813.17,841.07 818.73,839.75 823.40,838.00 C828.07,836.25 831.82,833.93 835.00,831.60 C838.18,829.27 839.77,827.78 842.50,824.00 C845.23,820.22 849.07,813.95 851.40,808.90 C853.73,803.85 854.82,800.45 856.50,793.70 C858.18,786.95 860.03,775.58 861.50,768.40 C862.97,761.22 863.85,754.62 865.30,750.60 C866.75,746.58 868.52,744.30 870.20,744.30 C871.88,744.30 873.90,746.58 875.40,750.60 C876.90,754.62 877.72,760.80 879.20,768.40 C880.68,776.00 882.40,789.45 884.30,796.20 C886.20,802.95 887.43,805.52 890.60,808.90 C893.77,812.28 898.23,814.88 903.30,816.50 C908.37,818.12 916.83,817.65 921.00,818.60 C925.17,819.55 925.80,821.08 928.30,822.20 C930.80,823.32 933.60,825.42 936.00,825.30 C938.40,825.18 940.55,822.78 942.70,821.50 C944.85,820.22 946.10,817.33 948.90,817.60 C951.70,817.87 956.55,822.87 959.50,823.10 C962.45,823.33 963.83,818.80 966.60,819.00 C969.37,819.20 973.53,823.82 976.10,824.30 C978.67,824.78 979.82,821.72 982.00,821.90 C984.18,822.08 987.02,825.32 989.20,825.40 C991.38,825.48 993.13,822.47 995.10,822.40 C997.07,822.33 999.22,825.00 1001.00,825.00 C1002.78,825.00 1004.02,822.33 1005.80,822.40 C1007.58,822.47 1009.92,825.28 1011.70,825.40 C1013.48,825.52 1014.95,823.17 1016.50,823.10 C1018.05,823.03 1019.58,824.93 1021.00,825.00 C1022.42,825.07 1023.50,823.50 1025.00,823.50 C1026.50,823.50 1028.50,824.95 1030.00,825.00 C1031.50,825.05 1032.33,823.77 1034.00,823.80 C1035.67,823.83 1038.17,825.17 1040.00,825.20 C1041.83,825.23 1043.33,824.00 1045.00,824.00 C1046.67,824.00 1048.33,825.15 1050.00,825.20 C1051.67,825.25 1052.67,824.42 1055.00,824.30 C1057.33,824.18 1062.50,824.47 1064.00,824.50 L1066.30,804.10 L1068.00,757.10 L1069.20,788.70 L1069.90,821.90 L1072.00,824.50 L1075.00,825.50 L1082.90,825.40 L1114.50,825.40 L1116.20,820.70 L1117.50,825.40 L1143.50,825.40 L1144.60,820.70 L1145.50,825.40 L1163.30,825.40 L1164.30,821.40 L1165.30,825.40 L1202.50,825.40 L1202.50,703.50 L1203.50,703.50 L1203.50,581.00 L1203.50,703.50 L1204.50,703.50 L1204.50,825.40 L1239.00,825.40" fill="none" stroke="#000" stroke-width="1.0" stroke-linejoin="round"/><rect x="707" y="549" width="533" height="1" fill="#000"/><rect x="707" y="859" width="533" height="1" fill="#000"/><rect x="707" y="549" width="1" height="311" fill="#000"/><rect x="1239" y="549" width="1" height="311" fill="#000"/></svg>
<div class="t" style="right:565.00px;top:543.34px;font:normal 12px 'Liberation Sans', sans-serif;letter-spacing:0.0px;color:#000;-webkit-text-stroke:0.25px #000;transform:scaleX(1.15);transform-origin:100% 0">30</div>
<div class="t" style="right:565.00px;top:594.34px;font:normal 12px 'Liberation Sans', sans-serif;letter-spacing:0.0px;color:#000;-webkit-text-stroke:0.25px #000;transform:scaleX(1.15);transform-origin:100% 0">25</div>
<div class="t" style="right:565.00px;top:646.34px;font:normal 12px 'Liberation Sans', sans-serif;letter-spacing:0.0px;color:#000;-webkit-text-stroke:0.25px #000;transform:scaleX(1.15);transform-origin:100% 0">20</div>
<div class="t" style="right:565.00px;top:698.34px;font:normal 12px 'Liberation Sans', sans-serif;letter-spacing:0.0px;color:#000;-webkit-text-stroke:0.25px #000;transform:scaleX(1.15);transform-origin:100% 0">15</div>
<div class="t" style="right:565.00px;top:749.34px;font:normal 12px 'Liberation Sans', sans-serif;letter-spacing:0.0px;color:#000;-webkit-text-stroke:0.25px #000;transform:scaleX(1.15);transform-origin:100% 0">10</div>
<div class="t" style="right:565.00px;top:801.34px;font:normal 12px 'Liberation Sans', sans-serif;letter-spacing:0.0px;color:#000;-webkit-text-stroke:0.25px #000;transform:scaleX(1.15);transform-origin:100% 0">5</div>
<div class="t" style="right:565.00px;top:853.34px;font:normal 12px 'Liberation Sans', sans-serif;letter-spacing:0.0px;color:#000;-webkit-text-stroke:0.25px #000;transform:scaleX(1.15);transform-origin:100% 0">0</div>
<div class="t" style="left:657.5px;width:600px;text-align:center;top:517.84px;font:bold 12px 'Liberation Sans', sans-serif">Group Delay (msec)   Horn   Unmasked</div>
<div class="t" style="left:703.16px;top:868.84px;font:normal 12px 'Liberation Sans', sans-serif;letter-spacing:0.0px;color:#000;-webkit-text-stroke:0.25px #000;transform:scaleX(1.15);transform-origin:0 0">10</div>
<div class="t" style="left:751.68px;top:868.84px;font:normal 12px 'Liberation Sans', sans-serif;letter-spacing:0.0px;color:#000;-webkit-text-stroke:0.25px #000;transform:scaleX(1.15);transform-origin:0 0">2</div>
<div class="t" style="left:800.19px;top:868.84px;font:normal 12px 'Liberation Sans', sans-serif;letter-spacing:0.0px;color:#000;-webkit-text-stroke:0.25px #000;transform:scaleX(1.15);transform-origin:0 0">4</div>
<div class="t" style="left:828.57px;top:868.84px;font:normal 12px 'Liberation Sans', sans-serif;letter-spacing:0.0px;color:#000;-webkit-text-stroke:0.25px #000;transform:scaleX(1.15);transform-origin:0 0">6</div>
<div class="t" style="left:848.71px;top:868.84px;font:normal 12px 'Liberation Sans', sans-serif;letter-spacing:0.0px;color:#000;-webkit-text-stroke:0.25px #000;transform:scaleX(1.15);transform-origin:0 0">8</div>
<div class="t" style="left:864.33px;top:868.84px;font:normal 12px 'Liberation Sans', sans-serif;letter-spacing:0.0px;color:#000;-webkit-text-stroke:0.25px #000;transform:scaleX(1.15);transform-origin:0 0">100</div>
<div class="t" style="left:912.84px;top:868.84px;font:normal 12px 'Liberation Sans', sans-serif;letter-spacing:0.0px;color:#000;-webkit-text-stroke:0.25px #000;transform:scaleX(1.15);transform-origin:0 0">2</div>
<div class="t" style="left:961.35px;top:868.84px;font:normal 12px 'Liberation Sans', sans-serif;letter-spacing:0.0px;color:#000;-webkit-text-stroke:0.25px #000;transform:scaleX(1.15);transform-origin:0 0">4</div>
<div class="t" style="left:989.73px;top:868.84px;font:normal 12px 'Liberation Sans', sans-serif;letter-spacing:0.0px;color:#000;-webkit-text-stroke:0.25px #000;transform:scaleX(1.15);transform-origin:0 0">6</div>
<div class="t" style="left:1009.87px;top:868.84px;font:normal 12px 'Liberation Sans', sans-serif;letter-spacing:0.0px;color:#000;-webkit-text-stroke:0.25px #000;transform:scaleX(1.15);transform-origin:0 0">8</div>
<div class="t" style="left:1025.49px;top:868.84px;font:normal 12px 'Liberation Sans', sans-serif;letter-spacing:0.0px;color:#000;-webkit-text-stroke:0.25px #000;transform:scaleX(1.15);transform-origin:0 0">1000</div>
<div class="t" style="left:1074.00px;top:868.84px;font:normal 12px 'Liberation Sans', sans-serif;letter-spacing:0.0px;color:#000;-webkit-text-stroke:0.25px #000;transform:scaleX(1.15);transform-origin:0 0">2</div>
<div class="t" style="left:1122.52px;top:868.84px;font:normal 12px 'Liberation Sans', sans-serif;letter-spacing:0.0px;color:#000;-webkit-text-stroke:0.25px #000;transform:scaleX(1.15);transform-origin:0 0">4</div>
<div class="t" style="left:1150.90px;top:868.84px;font:normal 12px 'Liberation Sans', sans-serif;letter-spacing:0.0px;color:#000;-webkit-text-stroke:0.25px #000;transform:scaleX(1.15);transform-origin:0 0">6</div>
<div class="t" style="left:1171.03px;top:868.84px;font:normal 12px 'Liberation Sans', sans-serif;letter-spacing:0.0px;color:#000;-webkit-text-stroke:0.25px #000;transform:scaleX(1.15);transform-origin:0 0">8</div>
<div class="t" style="left:1186.65px;top:868.84px;font:normal 12px 'Liberation Sans', sans-serif;letter-spacing:0.0px;color:#000;-webkit-text-stroke:0.25px #000;transform:scaleX(1.15);transform-origin:0 0">10000</div>
<div class="t" style="left:1233.16px;top:868.84px;font:normal 12px 'Liberation Sans', sans-serif;letter-spacing:0.0px;color:#000;-webkit-text-stroke:0.25px #000;transform:scaleX(1.15);transform-origin:0 0">2</div>
<div class="t" style="left:757.5px;width:400px;text-align:center;top:896.84px;font:bold 12px 'Liberation Sans', sans-serif">Frequency (hertz)</div>
</body></html>
